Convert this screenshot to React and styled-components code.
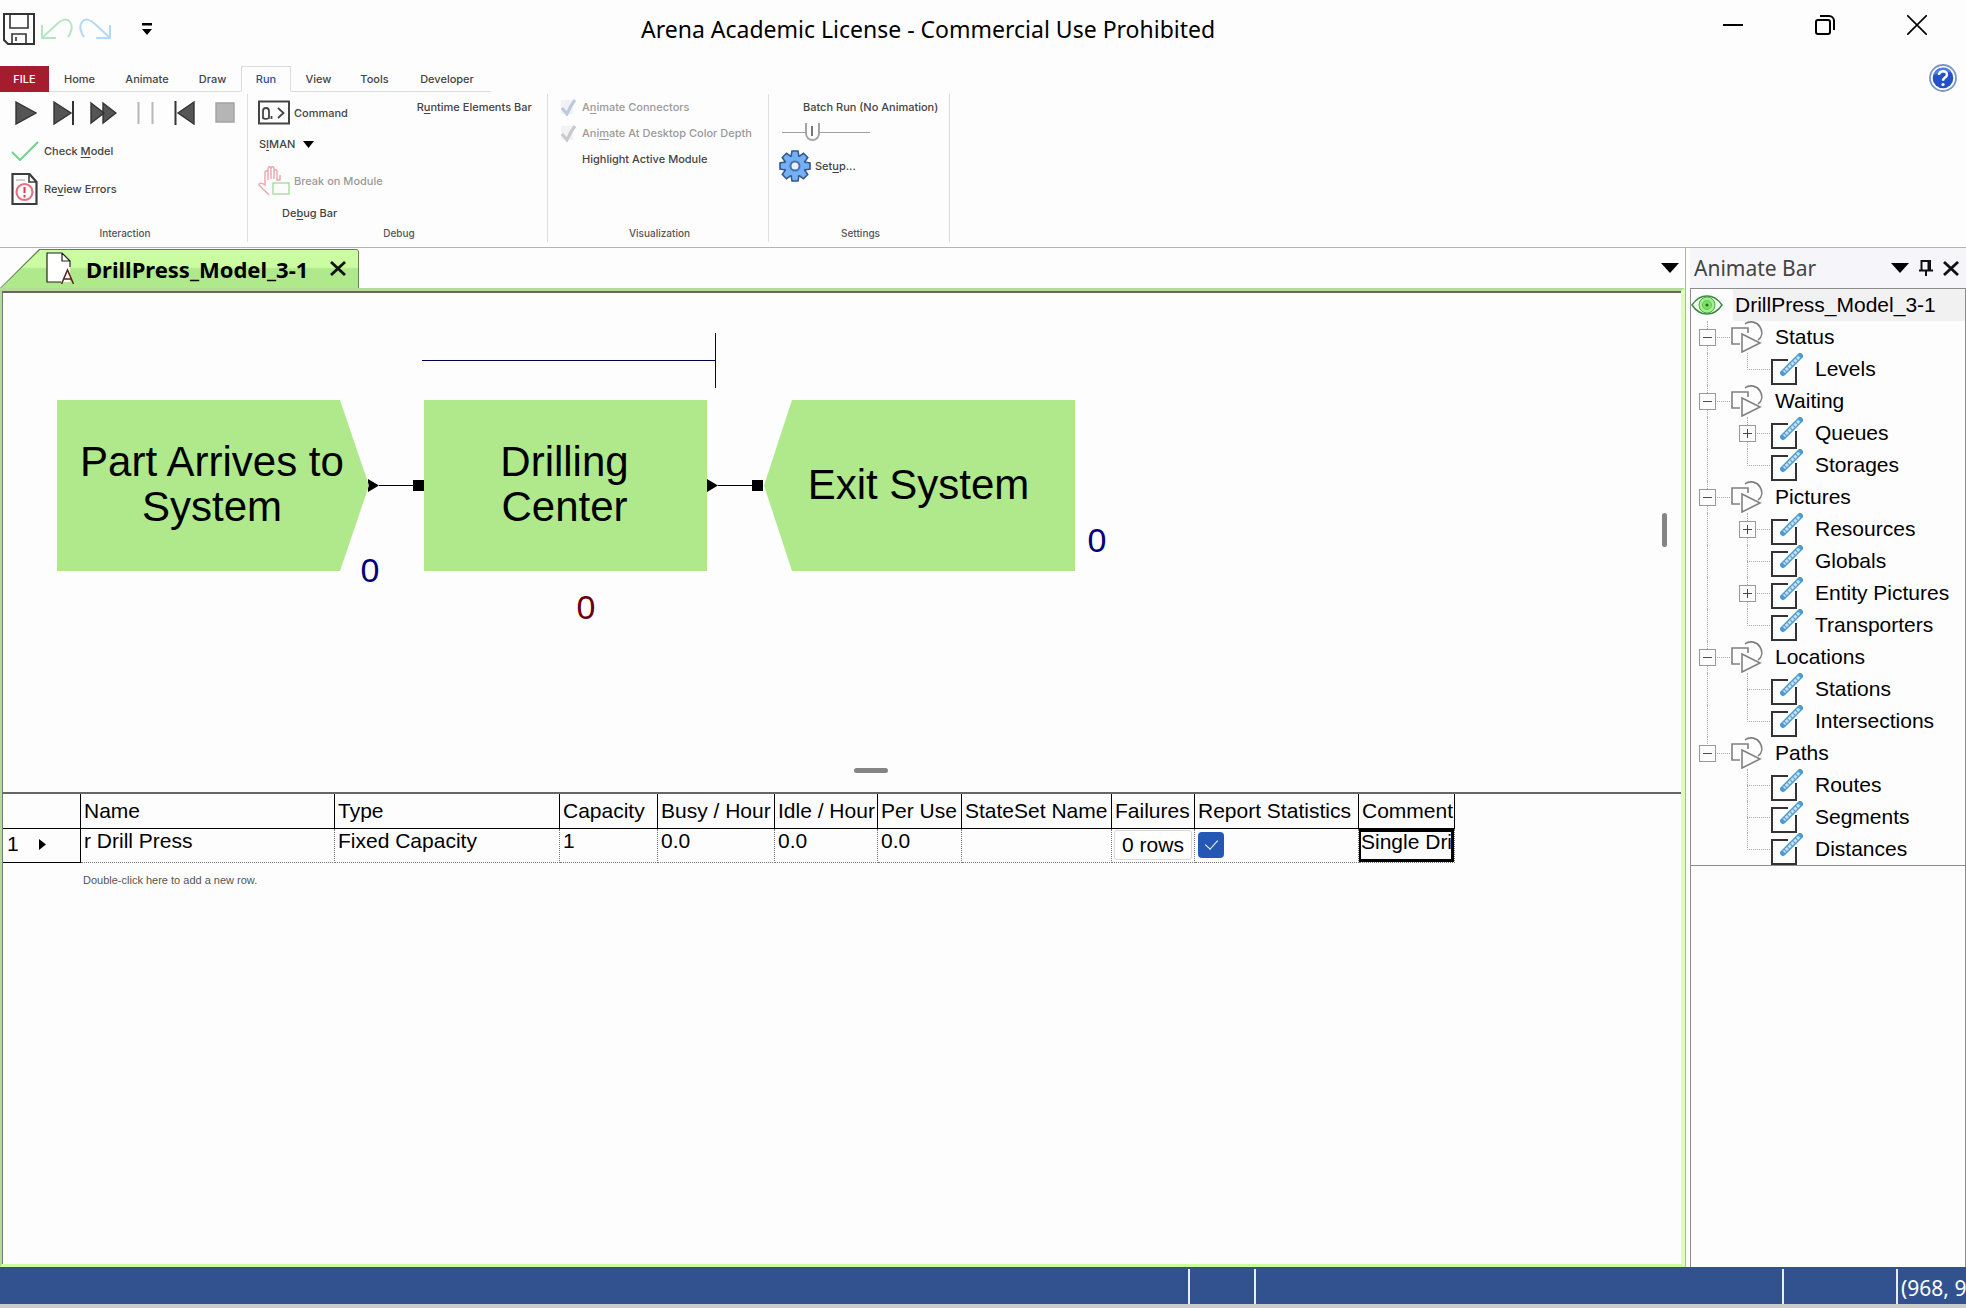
import React from 'react';
import styled, { createGlobalStyle, css } from 'styled-components';

const ui = `"Noto Sans", "Open Sans", sans-serif`;
const ribbon = `Inter, "Liberation Sans", sans-serif`;
const arial = `"Liberation Sans", Arial, sans-serif`;

const Global = createGlobalStyle`
  *, *::before, *::after { box-sizing: border-box; }
  body { margin: 0; background: #fdfdfd; color: #000; font-family: ${arial}; }
  button, input { font: inherit; color: inherit; margin: 0; padding: 0; border: 0; background: none; }
  svg { display: block; flex: none; }
`;

const Window = styled.div`
  display: flex;
  flex-direction: column;
  min-height: 100vh;
  overflow: hidden;
`;

/* ---------- title bar ---------- */
const TitleBar = styled.header`
  display: flex;
  height: 66px;
  flex: none;
`;
const QuickAccess = styled.div`
  display: flex;
  align-items: center;
  gap: 6px;
  width: 641px;
  height: 58px;
  padding-left: 3px;
`;
const Title = styled.h1`
  flex: 1;
  margin: 0;
  font: 400 23px/58px ${ui};
  white-space: nowrap;
`;
const WindowButtons = styled.div`
  display: flex;
  align-items: center;
  height: 50px;
  gap: 72px;
  padding-right: 39px;
`;
const IconButton = styled.button`
  display: flex;
  align-items: center;
  justify-content: center;
  margin-left: ${(p) => p.$lead || 0}px;
`;

/* ---------- ribbon ---------- */
const TabStrip = styled.nav`
  display: flex;
  justify-content: space-between;
  height: 24px;
  flex: none;
  padding-right: 9px;
`;
const Tabs = styled.div`
  display: grid;
  grid-template-columns: 49px 61px 74px 57px 50px 55px 57px 88px;
`;
const Tab = styled.button`
  font: 500 11px/24px ${ribbon};
  color: #444;
  border-bottom: 1px solid #dcdcdc;
  ${(p) => p.$kind === 'file' && css`
    background: #a51c2e;
    color: #fff;
    border-bottom-color: #a51c2e;
  `}
  ${(p) => p.$kind === 'active' && css`
    color: #2b4f92;
    border: 1px solid #dcdcdc;
    border-bottom-color: #fdfdfd;
  `}
`;
const RibbonBody = styled.div`
  display: flex;
  height: 158px;
  flex: none;
  padding-top: 4px;
  border-bottom: 1px solid #b4b4b4;
`;
const Group = styled.section`
  display: flex;
  flex-direction: column;
  width: ${(p) => p.$width}px;
  height: 148px;
  border-right: 1px solid #dedede;
`;
const GroupBody = styled.div`
  flex: 1;
  display: flex;
  gap: 10px;
  padding-left: ${(p) => p.$left}px;
`;
const Stack = styled.div`
  display: flex;
  flex-direction: column;
  align-items: flex-start;
`;
const GroupLabel = styled.h2`
  margin: 0;
  padding-left: 3px;
  text-align: center;
  font: 500 10px/18px ${ribbon};
  color: #555;
`;
const Command = styled.button`
  display: flex;
  align-items: center;
  gap: ${(p) => (p.$gap ?? 4)}px;
  height: ${(p) => p.$height}px;
  padding-left: ${(p) => p.$indent || 0}px;
  font: 500 11px/16px ${ribbon};
  color: ${(p) => (p.$muted ? '#9a9a9a' : '#444')};
  white-space: nowrap;
  u { text-underline-offset: 2px; }
`;
const IconSlot = styled.span`
  display: flex;
  width: ${(p) => p.$width}px;
`;
const Transport = styled.div`
  display: flex;
  align-items: center;
  gap: 16px;
  height: 38px;
`;
const Speed = styled.input`
  appearance: none;
  width: 88px;
  height: 24px;
  margin: 0 0 4px 3px;
  background: linear-gradient(#a0a0a0, #a0a0a0) center / 100% 1px no-repeat;
  &::-webkit-slider-thumb {
    appearance: none;
    width: 15px;
    height: 18px;
    border: 2px solid #a4a4a4;
    border-top: 0;
    border-radius: 0 0 8px 8px;
    background: linear-gradient(#777, #777) center / 2px 10px no-repeat #fdfdfd;
  }
`;

/* ---------- work area ---------- */
const Work = styled.main`
  display: grid;
  grid-template-columns: minmax(0, 1fr) 276px;
  gap: 4px;
  flex: 1;
`;
const Document = styled.div`
  display: flex;
  flex-direction: column;
  border-right: 1px solid #a9b99d;
`;
const DocTabs = styled.div`
  display: flex;
  justify-content: space-between;
  align-items: center;
  height: 40px;
  padding-right: 6px;
`;
const DocTab = styled.div`
  display: flex;
  align-items: center;
  height: 40px;
  width: 359px;
  padding-left: 46px;
  gap: 12px;
  background: #66805a;
  clip-path: polygon(0 100%, 39px 1px, 357px 1px, 359px 3px, 359px 100%);
  position: relative;
  z-index: 0;
  &::before {
    content: '';
    position: absolute;
    z-index: -1;
    inset: 0;
    background: linear-gradient(#cbfca2 0 48%, #b0e98c 52%);
    clip-path: polygon(1px 100%, 40px 2px, 357px 2px, 358px 3px, 358px 100%);
  }
`;
const DocName = styled.span`
  width: 232px;
  padding-top: 2px;
  font: 700 22px/30px ${ui};
  white-space: nowrap;
`;
const DocFrame = styled.div`
  display: flex;
  flex-direction: column;
  flex: 1;
  border: solid #b4dc98;
  border-width: 3px 4px 3px 2px;
  border-right-color: #deffb8;
  border-bottom-color: #caff9c;
`;
const Canvas = styled.div`
  position: relative;
  height: 501px;
  border-top: 2px solid #666;
  border-left: 1px solid #777;
`;
const CanvasInk = styled.svg`
  position: absolute;
  left: 0;
  top: 0;
`;
const Module = styled.div`
  position: absolute;
  left: ${(p) => p.$x}px;
  top: 107px;
  width: ${(p) => p.$width}px;
  height: 171px;
  display: flex;
  align-items: center;
  justify-content: center;
  text-align: center;
  padding: 0 2px 3px 0;
  background: #afe98c;
  clip-path: ${(p) => p.$shape || 'none'};
  font: 400 42px/45px ${arial};
`;
const Counter = styled.output`
  position: absolute;
  left: ${(p) => p.$x}px;
  top: ${(p) => p.$y}px;
  width: 24px;
  text-align: center;
  font: 400 34px/40px "Liberation Sans Narrow", ${arial};
  color: ${(p) => p.$color};
`;
const Grip = styled.div`
  position: absolute;
  background: #858585;
  border-radius: 3px;
  ${(p) => p.$vertical
    ? css`right: 14px; top: 220px; width: 5px; height: 34px;`
    : css`left: 851px; top: 475px; width: 34px; height: 5px;`}
`;
const Sheet = styled.div`
  flex: 1;
  min-height: 420px;
  border-top: 2px solid #666;
  border-left: 1px solid #777;
`;
const Grid = styled.table`
  table-layout: fixed;
  width: 1452px;
  border-collapse: separate;
  border-spacing: 0;
  font: 400 21px/24px ${arial};
  text-align: left;
  white-space: nowrap;
  thead th {
    height: 35px;
    padding: 0 0 0 3px;
    font-weight: 400;
    border-right: 1px solid #000;
    border-bottom: 1px solid #000;
  }
  tbody th {
    padding: 0 0 3px 4px;
    font-weight: 400;
    border-right: 1px solid #000;
    border-bottom: 1px solid #000;
  }
  tbody td {
    height: 34px;
    padding: 0 0 0 3px;
    vertical-align: top;
    border-right: 1px dotted #777;
    border-bottom: 1px dotted #777;
  }
  tbody td:nth-last-child(-n + 3) { padding: 0; }
`;
const RowHead = styled.span`
  display: flex;
  align-items: center;
  gap: 20px;
`;
const RowsButton = styled.button`
  display: block;
  width: 78px;
  height: 30px;
  margin: 1px 2px;
  border: 1px solid #d8d8d8;
  border-radius: 3px;
  background: #fff;
`;
const Tick = styled.input`
  appearance: none;
  display: block;
  width: 26px;
  height: 26px;
  margin: 3px;
  border-radius: 4px;
  background: #2458b4;
  &::before {
    content: '';
    display: block;
    width: 7px;
    height: 12px;
    margin: 5px auto 0;
    border: solid #fff;
    border-width: 0 1px 1px 0;
    transform: rotate(42deg);
  }
`;
const CellEdit = styled.input`
  display: block;
  width: 95px;
  height: 33px;
  padding-bottom: 8px;
  border: 3px solid #000;
  border-left-width: 2px;
  outline: none;
`;
const Hint = styled.p`
  margin: 9px 0 0 80px;
  font: 400 11px/16px ${arial};
  color: #555;
`;

/* ---------- animate bar ---------- */
const Panel = styled.aside`
  display: flex;
  flex-direction: column;
`;
const PanelHead = styled.div`
  display: flex;
  align-items: center;
  height: 40px;
  padding: 0 7px 0 4px;
  background: #f6f6fa;
`;
const PanelTitle = styled.h2`
  flex: 1;
  margin: 0;
  font: 400 21px/38px ${ui};
  color: #444;
`;
const PanelTools = styled.div`
  display: flex;
  align-items: center;
  gap: 10px;
`;
const PanelBody = styled.div`
  flex: 1;
  border: 1px solid #8c8c8c;
  border-bottom: 0;
`;
const Tree = styled.ul`
  margin: 0;
  padding: 0;
  list-style: none;
  border-bottom: 1px solid #8c8c8c;
  font: 400 21px/32px ${arial};
  white-space: nowrap;
`;
const Node = styled.li`
  display: flex;
  align-items: center;
  height: 32px;
`;
const RootLabel = styled.span`
  flex: 1;
  margin-left: 10px;
  padding-left: 2px;
  background: #f2f1f2;
`;
const NodeLabel = styled.span`
  padding-left: 12px;
`;
const Guide = styled.span`
  display: flex;
  align-items: center;
  position: relative;
  width: 40px;
  height: 32px;
  padding-left: 8px;
  flex: none;
  &::before {
    content: '';
    position: absolute;
    left: 16px;
    top: 0;
    height: ${(p) => (p.$half ? 17 : 32)}px;
    border-left: ${(p) => (p.$stem ? '1px dotted #aaa' : '0')};
  }
  &::after {
    content: '';
    position: absolute;
    left: 16px;
    top: 16px;
    width: 23px;
    border-top: ${(p) => (p.$branch ? '1px dotted #aaa' : '0')};
  }
`;
const Toggle = styled.button`
  position: relative;
  z-index: 1;
  display: flex;
  align-items: center;
  justify-content: center;
  width: 17px;
  height: 17px;
  border: 1px solid #999;
  background: #fdfdfd;
`;

/* ---------- status bar ---------- */
const StatusBar = styled.footer`
  display: grid;
  grid-template-columns: minmax(0, 1fr) 66px 528px 114px 70px;
  height: 41px;
  flex: none;
  padding-top: 2px;
  background: #31528f;
  border-bottom: 4px solid #cbcbcb;
`;
const StatusCell = styled.div`
  overflow: hidden;
  padding-left: 3px;
  border-left: ${(p) => (p.$first ? '0' : '2px solid #e8ecf4')};
  color: #fff;
  font: 400 21px/38px ${ui};
  white-space: nowrap;
`;

/* ---------- drawings ---------- */
const SaveIcon = () => (
  <svg width="32" height="32" viewBox="0 0 32 32" fill="none" stroke="#333" strokeWidth="2">
    <path d="M1 1h30v30H5l-4-4z" />
    <path d="M7 1v14h18V1" strokeWidth="1.6" />
    <path d="M9 31V21h14v10M13 24v4" strokeWidth="1.6" />
  </svg>
);
const CurveIcon = ({ color, flip }) => (
  <svg width="32" height="22" viewBox="0 0 32 22" fill="none" stroke={color} strokeWidth="2">
    <g transform={flip ? 'translate(32 0) scale(-1 1)' : undefined}>
      <path d="M1 7v13h14M1 20L16 6c5-5 10-6 13-2s2 9-2 15" />
    </g>
  </svg>
);
const QuickMenuIcon = () => (
  <svg width="10" height="13" viewBox="0 0 10 13"><path d="M0 0h10v2.6H0zM0 6h10L5 12z" /></svg>
);
const MinIcon = () => (
  <svg width="20" height="20" viewBox="0 0 20 20"><path d="M0 9h20v2H0z" /></svg>
);
const RestoreIcon = () => (
  <svg width="20" height="20" viewBox="0 0 20 20" fill="none" stroke="#000" strokeWidth="2">
    <rect x="1" y="5" width="14" height="14" rx="2" />
    <path d="M5 1h9a5 5 0 0 1 5 5v9" />
  </svg>
);
const CloseIcon = () => (
  <svg width="20" height="20" viewBox="0 0 20 20" stroke="#000" strokeWidth="1.6"><path d="M0 0l20 20M20 0L0 20" /></svg>
);
const HelpIcon = () => (
  <svg width="28" height="28" viewBox="0 0 28 28" fill="none">
    <circle cx="14" cy="14" r="13" fill="#fff" stroke="#7c97c4" strokeWidth="1.8" />
    <circle cx="14" cy="14" r="10.3" fill="#2450c8" />
    <path d="M4.500 11a10 10 0 0 1 18-3c-6 0-12 2-18 3z" fill="#4f7bea" />
    <path d="M10 11c0-5 8-5 8-.5 0 3-4 3-4 6.200" stroke="#fff" strokeWidth="2.400" />
    <circle cx="14" cy="20.500" r="1.600" fill="#fff" />
  </svg>
);
const Shape = ({ w, children }) => (
  <svg width={w} height="24" viewBox={`0 0 ${w} 24`} fill="#555" stroke="#333" strokeWidth="1.4">{children}</svg>
);
const CheckIcon = () => (
  <svg width="28" height="20" viewBox="0 0 28 20" fill="none" stroke="#6fd58c" strokeWidth="2"><path d="M1 11l8 8L27 1" /></svg>
);
const ErrorDocIcon = () => (
  <svg width="27" height="32" viewBox="0 0 27 32" fill="none" stroke="#3c3c3c" strokeWidth="2.2">
    <path d="M1.5 1h17l7 8v22h-24z" />
    <path d="M18 1v8h7" strokeWidth="1.6" />
    <path d="M5 7h9" stroke="#bbb" strokeWidth="1.4" />
    <circle cx="13.5" cy="19" r="8" stroke="#e07484" />
    <path d="M13.5 14v6M13.5 22v2.5" stroke="#d8404f" strokeWidth="2" />
  </svg>
);
const ConsoleIcon = () => (
  <svg width="32" height="26" viewBox="0 0 32 26" fill="none" stroke="#444" strokeWidth="2">
    <path d="M1 1.5h30v22H1z" />
    <path d="M5 18v-7c0-4 6-4 6 0v7c-2 1-5 1-6 0zM13.5 16v3M20 8l5.5 5-5.5 5" strokeWidth="1.8" />
  </svg>
);
const BreakIcon = () => (
  <svg width="32" height="30" viewBox="0 0 32 30" fill="none" strokeWidth="1.4">
    <path d="M11 29L1 19c0-3 3-2 6 0V7c0-3 3-3 3 0v7V3c0-3 3-3 3 0v10V3c0-3 3-3 3 0v10-7c0-3 3-3 3 0v8l3 0V9" stroke="#f0a3ac" />
    <rect x="15" y="17" width="16" height="11" stroke="#a8dca0" fill="#fdfdfd" />
  </svg>
);
const TickMark = ({ color }) => (
  <svg width="17" height="17" viewBox="0 0 17 17" fill="none">
    <rect x="1" y="1" width="12" height="14" fill="#f1f2f5" />
    <path d="M2 9l5 6c2-5 4-9 8-14" stroke={color} strokeWidth="3" />
  </svg>
);
const teeth = [0, 45, 90, 135, 180, 225, 270, 315];
const GearIcon = () => (
  <svg width="32" height="32" viewBox="0 0 32 32">
    {teeth.map((a) => (
      <path key={a} d="M12 7l1-6h6l1 6z" transform={`rotate(${a} 16 16)`} fill="#74b0f4" stroke="#35588c" strokeWidth="1.6" />
    ))}
    <circle cx="16" cy="16" r="10.5" fill="#74b0f4" stroke="#35588c" strokeWidth="1" />
    {teeth.map((a) => (
      <path key={a} d="M12.8 9l.9-6h4.600l.9 6z" transform={`rotate(${a} 16 16)`} fill="#74b0f4" />
    ))}
    <circle cx="16" cy="16" r="4.5" fill="#e6f1ff" stroke="#4a6ea8" strokeWidth="2" />
  </svg>
);
const Caret = ({ w = 18 }) => (
  <svg width={w} height={w === 18 ? 10 : 7} viewBox="0 0 18 10" preserveAspectRatio="none"><path d="M0 0h18L9 10z" /></svg>
);
const BoldClose = () => (
  <svg width="16" height="15" viewBox="0 0 16 15" stroke="#111" strokeWidth="2.8"><path d="M1 1l14 13M15 1L1 14" /></svg>
);
const PinIcon = () => (
  <svg width="14" height="16" viewBox="0 0 14 16" fill="none" stroke="#111" strokeWidth="2"><path d="M2.5 0v10M2.5 1h8M9.5 0v10M11 0v10M0 10.500h14M7 10v6" /></svg>
);
const ModelIcon = () => (
  <svg width="28" height="32" viewBox="0 0 28 32" fill="none">
    <path d="M1 1h15l8 8v21H1z" fill="#fff" />
    <path d="M15 30H1V1h15l8 8v6M16 1v8h8" stroke="#222" strokeWidth="1.2" />
    <path d="M15.5 32L21.500 18l6 14M17.500 27h8" stroke="#5a2323" strokeWidth="1.5" />
  </svg>
);
const EyeIcon = () => (
  <svg width="32" height="22" viewBox="0 0 32 22" fill="none">
    <path d="M1 11c8-12 22-12 30 0-8 12-22 12-30 0z" fill="#f3fff0" stroke="#3f8a45" strokeWidth="1.5" />
    <circle cx="16" cy="11" r="8" fill="#a4f090" stroke="#4da750" />
    <circle cx="16" cy="11" r="4.5" fill="#7ce068" stroke="#5cc850" />
    <circle cx="16" cy="11" r="1.5" fill="#256b2a" />
  </svg>
);
const ShapesIcon = () => (
  <svg width="32" height="32" viewBox="0 0 32 32" fill="none" stroke="#808080" strokeWidth="1.6">
    <path d="M9 23H1V7h16v5" />
    <path d="M14 3c5-4 12-2 15 3s2 10-2 13" />
    <path d="M11 13l18 9-18 9z" />
  </svg>
);
const EditIcon = () => (
  <svg width="32" height="32" viewBox="0 0 32 32" fill="none">
    <path d="M17 7H1v24h24V14" stroke="#333" strokeWidth="2" />
    <path d="M12 20L29 3" stroke="#4f9bd0" strokeWidth="6" strokeLinecap="round" />
    <path d="M12 20L29 3" stroke="#c4e0f3" strokeWidth="3" strokeDasharray="3 1" />
    <path d="M10 22l1-5 4 4z" fill="#4f9bd0" />
  </svg>
);

/* ---------- data ---------- */
const tabs = [
  ['FILE', 'file'], ['Home'], ['Animate'], ['Draw'], ['Run', 'active'], ['View'], ['Tools'], ['Developer'],
];
const columns = [
  ['', 78], ['Name', 254], ['Type', 225], ['Capacity', 98], ['Busy / Hour', 117], ['Idle / Hour', 103],
  ['Per Use', 84], ['StateSet Name', 150], ['Failures', 83], ['Report Statistics', 164], ['Comment', 96],
];
const tree = [
  ['Status', [['Levels']]],
  ['Waiting', [['Queues', true], ['Storages']]],
  ['Pictures', [['Resources', true], ['Globals'], ['Entity Pictures', true], ['Transporters']]],
  ['Locations', [['Stations'], ['Intersections']]],
  ['Paths', [['Routes'], ['Segments'], ['Distances']]],
];

const Expander = ({ open, name }) => (
  <Toggle aria-label={`${open ? 'Collapse' : 'Expand'} ${name}`}>
    <svg width="9" height="9" viewBox="0 0 9 9" stroke="#446" strokeWidth="1">
      <path d={open ? 'M0 4.500h9' : 'M0 4.500h9M4.500 0v9'} />
    </svg>
  </Toggle>
);

const Ribbon = () => (
  <RibbonBody>
    <Group $width={248}>
      <GroupBody $left={11}>
        <Stack>
          <Transport>
            <IconButton aria-label="Go" $lead={4}><Shape w={22}><path d="M1 1l20 11L1 23z" /></Shape></IconButton>
            <IconButton aria-label="Step"><Shape w={21}><path d="M1 1l17 11L1 23z" /><path d="M20 0v24" strokeWidth="2" /></Shape></IconButton>
            <IconButton aria-label="Fast forward"><Shape w={27}><path d="M1 2l13 10L1 22zM13 2l13 10-13 10z" /></Shape></IconButton>
            <IconButton aria-label="Pause" $lead={4}><Shape w={17}><path d="M1.5 1v22M15.500 1v22" stroke="#b8b8b8" strokeWidth="2" /></Shape></IconButton>
            <IconButton aria-label="Start over" $lead={4}><Shape w={21}><path d="M20 1L4 12l16 11z" /><path d="M1.5 0v24" strokeWidth="2" /></Shape></IconButton>
            <IconButton aria-label="End" $lead={4}><Shape w={20}><path d="M1 2h18v19H1z" fill="#b5b5b5" stroke="#a3a3a3" /></Shape></IconButton>
          </Transport>
          <Command $height={38}><IconSlot $width={29}><CheckIcon /></IconSlot><span>Check <u>M</u>odel</span></Command>
          <Command $height={38}><IconSlot $width={29}><ErrorDocIcon /></IconSlot><span>Re<u>v</u>iew Errors</span></Command>
        </Stack>
      </GroupBody>
      <GroupLabel>Interaction</GroupLabel>
    </Group>
    <Group $width={300}>
      <GroupBody $left={10}>
        <Stack>
          <Command $height={38}><ConsoleIcon /><span>Command</span></Command>
          <Command $height={24} $gap={8} $indent={1}><span>S<u>I</u>MAN</span><Caret w={11} /></Command>
          <Command $height={50} $muted><BreakIcon /><span>Break on Module</span></Command>
          <Command $height={14} $indent={24}><span>De<u>b</u>ug Bar</span></Command>
        </Stack>
        <Stack>
          <Command $height={26} $indent={24}><span>R<u>u</u>ntime Elements Bar</span></Command>
        </Stack>
      </GroupBody>
      <GroupLabel>Debug</GroupLabel>
    </Group>
    <Group $width={221}>
      <GroupBody $left={12}>
        <Stack>
          <Command $height={26} $gap={5} $muted><TickMark color="#bcc8de" /><span>A<u>n</u>imate Connectors</span></Command>
          <Command $height={26} $gap={5} $muted><TickMark color="#c9c9c9" /><span>Ani<u>m</u>ate At Desktop Color Depth</span></Command>
          <Command $height={26} $indent={22}>Highlight Active Module</Command>
        </Stack>
      </GroupBody>
      <GroupLabel>Visualization</GroupLabel>
    </Group>
    <Group $width={181}>
      <GroupBody $left={10}>
        <Stack>
          <Command $height={26} $indent={24}>Batch Run (No Animation)</Command>
          <Speed type="range" min="0" max="100" defaultValue="31" aria-label="Animation speed" />
          <Command $height={36}><GearIcon /><span>Set<u>u</u>p...</span></Command>
        </Stack>
      </GroupBody>
      <GroupLabel>Settings</GroupLabel>
    </Group>
  </RibbonBody>
);

const Diagram = () => (
  <Canvas>
    <CanvasInk width="1100" height="300" viewBox="0 0 1100 300">
      <path d="M419 67.500h293M712.500 40v55" stroke="#000050" fill="none" />
      <path d="M376 192.500h40M715 192.500h40" stroke="#000" />
      <path d="M365 186v13l11-6.500zM704 186v13l11-6.500z" />
      <path d="M410 187h11v11h-11zM749 187h11v11h-11z" />
    </CanvasInk>
    <Module $x={54} $width={312} $shape="polygon(0 0, 283px 0, 100% 50%, 283px 100%, 0 100%)">
      Part Arrives to<br />System
    </Module>
    <Module $x={421} $width={283}>Drilling<br />Center</Module>
    <Module $x={761} $width={311} $shape="polygon(28px 0, 100% 0, 100% 100%, 28px 100%, 0 50%)">
      Exit System
    </Module>
    <Counter $x={355} $y={257} $color="#00007c">0</Counter>
    <Counter $x={571} $y={294} $color="#680010">0</Counter>
    <Counter $x={1082} $y={227} $color="#00007c">0</Counter>
    <Grip $vertical />
    <Grip />
  </Canvas>
);

const Resources = () => (
  <Sheet>
    <Grid>
      <colgroup>{columns.map(([name, w]) => <col key={name} width={w} />)}</colgroup>
      <thead>
        <tr>{columns.map(([name]) => <th key={name} scope="col">{name}</th>)}</tr>
      </thead>
      <tbody>
        <tr>
          <th scope="row">
            <RowHead>1<svg width="7" height="11" viewBox="0 0 7 11"><path d="M0 0l7 5.500L0 11z" /></svg></RowHead>
          </th>
          <td>r Drill Press</td>
          <td>Fixed Capacity</td>
          <td>1</td>
          <td>0.0</td>
          <td>0.0</td>
          <td>0.0</td>
          <td />
          <td><RowsButton>0 rows</RowsButton></td>
          <td><Tick type="checkbox" defaultChecked aria-label="Report Statistics" /></td>
          <td><CellEdit type="text" defaultValue="Single Dri" aria-label="Comment" /></td>
        </tr>
      </tbody>
    </Grid>
    <Hint>Double-click here to add a new row.</Hint>
  </Sheet>
);

const AnimateBar = () => (
  <Panel>
    <PanelHead>
      <PanelTitle>Animate Bar</PanelTitle>
      <PanelTools>
        <IconButton aria-label="Panel menu"><Caret /></IconButton>
        <IconButton aria-label="Pin panel"><PinIcon /></IconButton>
        <IconButton aria-label="Close panel"><BoldClose /></IconButton>
      </PanelTools>
    </PanelHead>
    <PanelBody>
      <Tree>
        <Node><EyeIcon /><RootLabel>DrillPress_Model_3-1</RootLabel></Node>
        {tree.map(([group, items], g) => {
          const last = g === tree.length - 1;
          return (
            <React.Fragment key={group}>
              <Node>
                <Guide $stem $branch $half={last}><Expander open name={group} /></Guide>
                <ShapesIcon />
                <NodeLabel>{group}</NodeLabel>
              </Node>
              {items.map(([name, more], i) => (
                <Node key={name}>
                  <Guide $stem={!last} />
                  <Guide $stem $branch $half={i === items.length - 1}>{more && <Expander name={name} />}</Guide>
                  <EditIcon />
                  <NodeLabel>{name}</NodeLabel>
                </Node>
              ))}
            </React.Fragment>
          );
        })}
      </Tree>
    </PanelBody>
  </Panel>
);

export default function App() {
  return (
    <Window>
      <Global />
      <TitleBar>
        <QuickAccess>
          <IconButton aria-label="Save"><SaveIcon /></IconButton>
          <IconButton aria-label="Undo"><CurveIcon color="#b5e6c2" /></IconButton>
          <IconButton aria-label="Redo"><CurveIcon color="#b4d9f2" flip /></IconButton>
          <IconButton aria-label="Customize toolbar" $lead={25}><QuickMenuIcon /></IconButton>
        </QuickAccess>
        <Title>Arena Academic License - Commercial Use Prohibited</Title>
        <WindowButtons>
          <IconButton aria-label="Minimize"><MinIcon /></IconButton>
          <IconButton aria-label="Restore"><RestoreIcon /></IconButton>
          <IconButton aria-label="Close"><CloseIcon /></IconButton>
        </WindowButtons>
      </TitleBar>
      <TabStrip>
        <Tabs>{tabs.map(([name, kind]) => <Tab key={name} $kind={kind}>{name}</Tab>)}</Tabs>
        <IconButton aria-label="Help"><HelpIcon /></IconButton>
      </TabStrip>
      <Ribbon />
      <Work>
        <Document>
          <DocTabs>
            <DocTab>
              <ModelIcon />
              <DocName>DrillPress_Model_3-1</DocName>
              <IconButton aria-label="Close document"><BoldClose /></IconButton>
            </DocTab>
            <IconButton aria-label="Open documents"><Caret /></IconButton>
          </DocTabs>
          <DocFrame>
            <Diagram />
            <Resources />
          </DocFrame>
        </Document>
        <AnimateBar />
      </Work>
      <StatusBar>
        <StatusCell $first />
        <StatusCell />
        <StatusCell />
        <StatusCell />
        <StatusCell>(968, 9</StatusCell>
      </StatusBar>
    </Window>
  );
}
